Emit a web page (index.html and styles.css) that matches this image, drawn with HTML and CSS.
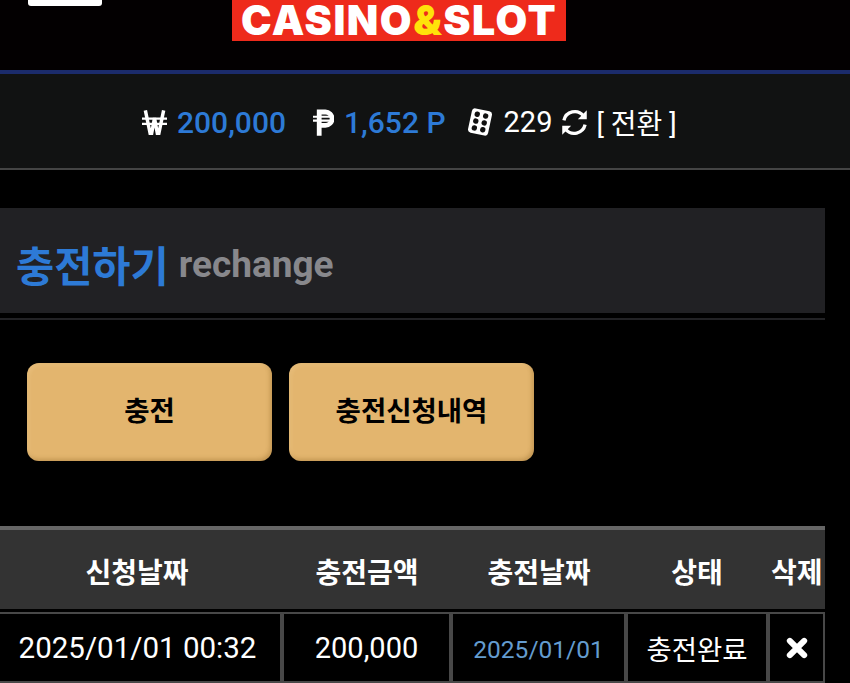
FILE: index.html

```html
<!DOCTYPE html>
<html lang="ko">
<head>
    <meta charset="UTF-8">
    <meta name="viewport" content="width=device-width, initial-scale=1.0">
    <title>CASINO&amp;SLOT | 충전하기</title>
    <link rel="stylesheet" href="styles.css">
</head>
<body>
    <header class="top">
        <div class="menu-btn"></div>
        <div class="logo">CASINO<span class="amp">&amp;</span>SLOT</div>
    </header>

    <div class="wallet">
        <svg class="ico ico-won" viewBox="0 0 26 26"><path d="M3.500 1l5 24h1.500l3-16 3 16h1.500l5-24" fill="none" stroke="#fff" stroke-width="3.600"/><path d="M0 9.500h26M0 15h26" fill="none" stroke="#fff" stroke-width="2.400"/></svg>
        <span class="money">200,000</span>
        <svg class="ico ico-point" viewBox="0 0 22 28"><path d="M6.500 28V3h6.500a6.500 6.500 0 0 1 0 14H6.500" fill="none" stroke="#fff" stroke-width="5"/><path d="M0 8h22M0 12h22" fill="none" stroke="#fff" stroke-width="2.200"/></svg>
        <span class="money">1,652 P</span>
        <svg class="ico ico-dice" viewBox="0 0 26 26">
            <g transform="rotate(12 13 13)">
                <rect x="3.500" y="1.500" width="19" height="23" rx="3" fill="#fff"/>
                <circle cx="9" cy="6.500" r="2.500" fill="#111"/><circle cx="17" cy="6.500" r="2.500" fill="#111"/>
                <circle cx="9" cy="13" r="2.500" fill="#111"/><circle cx="17" cy="13" r="2.500" fill="#111"/>
                <circle cx="9" cy="19.500" r="2.500" fill="#111"/><circle cx="17" cy="19.500" r="2.500" fill="#111"/>
            </g>
        </svg>
        <span class="count">229</span>
        <svg class="ico ico-sync" viewBox="0 0 26 26"><path d="M3.500 11A10 10 0 0 1 21 7M22.500 15A10 10 0 0 1 5 19" fill="none" stroke="#fff" stroke-width="3"/><path d="M24 2v8h-8zM2 24v-8h8z" fill="#fff"/></svg>
        <span class="switch">[ 전환 ]</span>
    </div>

    <div class="page-title">
        <h1>충전하기</h1>
        <span class="sub">rechange</span>
    </div>
    <div class="title-line"></div>

    <div class="btn-row">
        <button class="gold-btn">충전</button>
        <button class="gold-btn">충전신청내역</button>
    </div>

    <div class="list">
        <div class="list-head">
            <div class="head-first">신청날짜</div>
            <div>충전금액</div>
            <div>충전날짜</div>
            <div>상태</div>
            <div class="head-last">삭제</div>
        </div>
        <div class="list-row">
            <div class="cell cell-first">2025/01/01 00:32</div>
            <div class="cell">200,000</div>
            <div class="cell cell-date">2025/01/01</div>
            <div class="cell cell-state">충전완료</div>
            <div class="cell">
                <svg class="ico-del" viewBox="0 0 20 20"><path d="M3.500 3.500l13 13M16.500 3.500l-13 13" fill="none" stroke="#fff" stroke-width="5.500" stroke-linecap="round"/></svg>
            </div>
        </div>
    </div>
</body>
</html>
```

FILE: styles.css

```css
* {
    box-sizing: border-box;
    margin: 0;
    padding: 0;
}

html, body {
    height: 683px;
    overflow: hidden;
}

body {
    background: #000;
    color: #fff;
    font-family: Roboto, "Noto Sans CJK KR", sans-serif;
}

.top {
    height: 74px;
    background: #030001;
    border-bottom: 4px solid #1b2b6b;
    display: flex;
    align-items: flex-start;
}

.menu-btn {
    width: 74px;
    height: 6px;
    margin-left: 28px;
    background: #fff;
    border-radius: 0 0 3px 3px;
}

.logo {
    width: 334px;
    height: 41px;
    margin-left: 130px;
    background: #ee2a1b;
    font-family: Inter, sans-serif;
    font-weight: 900;
    font-size: 41px;
    letter-spacing: 1.500px;
    line-height: 41px;
    text-align: center;
    white-space: nowrap;
}

.amp {
    color: #ffe20a;
}

.wallet {
    height: 96px;
    background: #111212;
    border-bottom: 2px solid #444;
    display: flex;
    align-items: center;
    padding: 2px 0 0 142px;
}

.ico {
    flex: none;
}

.ico-won {
    width: 25px;
    height: 26px;
    margin-right: 10px;
}

.ico-point {
    width: 21px;
    height: 29px;
    margin: 0 10px 0 27px;
}

.ico-dice {
    width: 28px;
    height: 28px;
    margin: 0 10px 0 20px;
}

.ico-sync {
    width: 29px;
    height: 29px;
    margin: 0 7px 0 8px;
}

.money {
    font-size: 30px;
    font-weight: 500;
    color: #2d7ad6;
}

.count {
    font-size: 29px;
}

.switch {
    font-size: 28px;
}

.page-title {
    width: 825px;
    height: 105px;
    margin-top: 38px;
    background: #212124;
    display: flex;
    align-items: center;
    gap: 10px;
    padding: 6px 0 0 16px;
}

h1 {
    font-size: 41.500px;
    font-weight: 700;
    color: #2d7ad6;
}

.sub {
    font-size: 37px;
    font-weight: 700;
    color: #88888c;
    padding-top: 2px;
}

.title-line {
    width: 825px;
    height: 2px;
    margin-top: 5px;
    background: #222225;
}

.btn-row {
    display: flex;
    gap: 17px;
    margin: 43px 0 0 27px;
}

.gold-btn {
    width: 245px;
    height: 98px;
    padding-bottom: 6px;
    border: none;
    border-radius: 12px;
    background: #e3b56e;
    box-shadow: inset -2px -2px 4px rgba(120,80,20,0.3), inset 2px 2px 4px rgba(255,230,180,0.2);
    color: #000;
    font-family: "Noto Sans CJK KR", sans-serif;
    font-size: 27.500px;
    font-weight: 700;
}

.list {
    width: 825px;
    margin-top: 65px;
    border-top: 4px solid #666;
}

.list-head {
    height: 79px;
    padding-top: 2px;
    background: #333;
    display: grid;
    grid-template-columns: 279px 176px 168px 148px 54px;
    font-size: 28px;
    font-weight: 700;
    text-align: center;
    align-items: center;
}

.list-head > div {
    white-space: nowrap;
}

.head-first {
    padding-right: 5px;
}

.head-last {
    padding-right: 3px;
}

.list-row {
    display: grid;
    grid-template-columns: 282px 169px 175px 142px 57px;
    margin-top: 3px;
    height: 71px;
}

.cell {
    border: 2px solid #484848;
    background: #000;
    display: flex;
    align-items: center;
    justify-content: center;
    font-size: 29px;
    white-space: nowrap;
}

.cell-first {
    border-left: none;
    padding-right: 5px;
    font-size: 29.500px;
}

.cell-date {
    padding-top: 3px;
    font-size: 24.500px;
    color: #649ccf;
}

.cell-state {
    font-size: 27.500px;
}

.ico-del {
    width: 22px;
    height: 22px;
}
```
